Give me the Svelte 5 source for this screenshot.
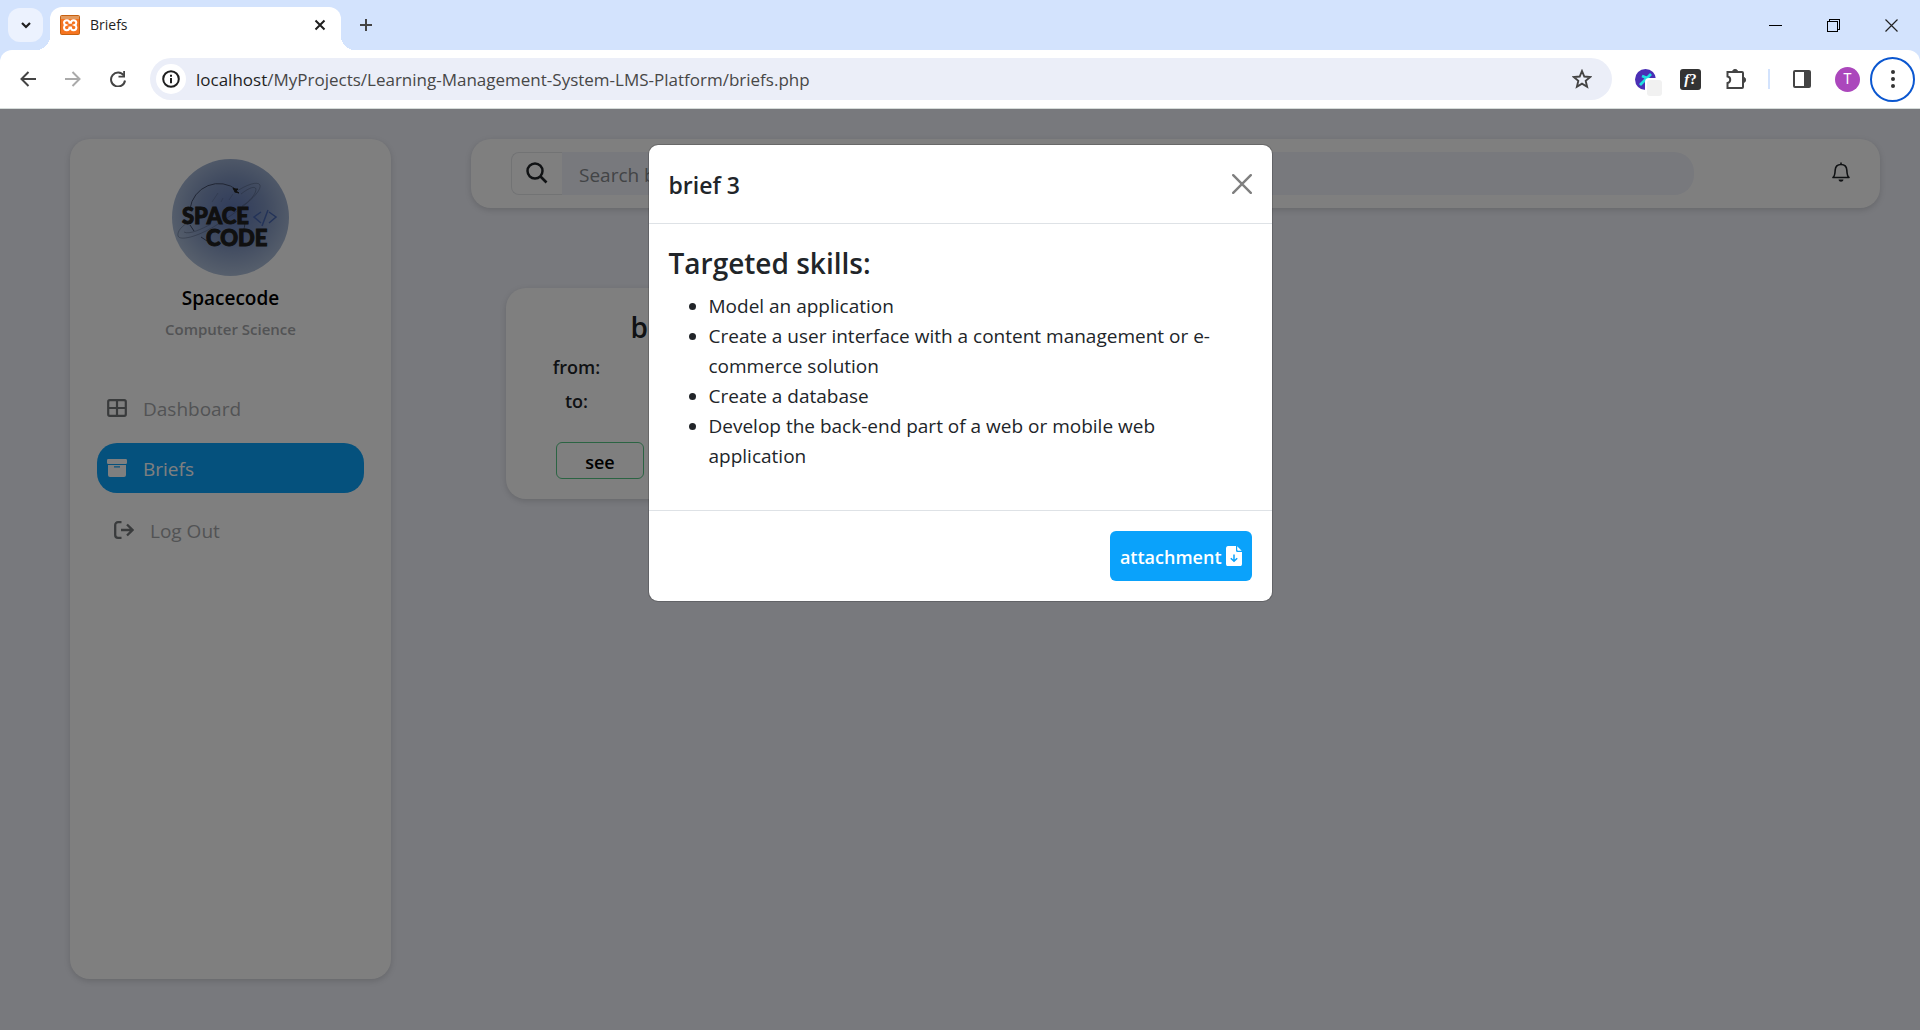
<script>
  const skills = [
    'Model an application',
    'Create a user interface with a content management or e-commerce solution',
    'Create a database',
    'Develop the back-end part of a web or mobile web application'
  ];
</script>

<div class="window">
  <header class="chrome">
    <div class="tabs">
      <button class="tab-search" aria-label="Search tabs">
        <svg width="12" height="12" viewBox="0 0 12 12"><path d="M2 4l4 4 4-4" fill="none" stroke="#1f1f1f" stroke-width="2.2" /></svg>
      </button>
      <div class="tab">
        <svg width="20" height="20" viewBox="0 0 20 20">
          <rect width="20" height="20" rx="2" fill="#c7600f" />
          <rect x="1" y="1" width="18" height="18" rx="1" fill="#f57420" />
          <path d="M1 1h18v3H1z" fill="#e39a5e" />
          <path d="M7 5.2c-2 0-3 1-3 2.500c0 1.200.8 1.900 1.800 2.300C4.400 10.500 4 11.500 4 12.500c0 1.500 1.200 2.700 2.800 2.700c1.700 0 2.700-1 2.700-2.700h1.400c0 1.700 1 2.700 2.600 2.700c1.700 0 2.900-1.200 2.900-2.700c0-1.200-.6-2.100-1.700-2.500c1.100-.4 1.600-1.200 1.600-2.300c0-1.600-1.100-2.500-2.800-2.500c-1.500 0-2.500.9-2.600 2.600H9.500C9.400 6.100 8.500 5.200 7 5.200z" fill="none" stroke="#fff" stroke-width="2" />
        </svg>
        <span class="tab-title">Briefs</span>
        <button class="plain" aria-label="Close tab">
          <svg width="12" height="12" viewBox="0 0 12 12"><path d="M1.500 1.500l9 9m0-9l-9 9" stroke="#1f1f1f" stroke-width="2" /></svg>
        </button>
      </div>
      <button class="plain new-tab" aria-label="New tab">
        <svg width="14" height="14" viewBox="0 0 14 14"><path d="M7 1v12M1 7h12" stroke="#444" stroke-width="2" /></svg>
      </button>
      <div class="controls">
        <button class="plain" aria-label="Minimize"><svg width="13" height="13" viewBox="0 0 13 13" shape-rendering="crispEdges"><path d="M0 6.500h13" stroke="#000" /></svg></button>
        <button class="plain" aria-label="Restore"><svg width="13" height="13" viewBox="0 0 13 13" shape-rendering="crispEdges"><path d="M.5 2.500h10v10H.5zM2.500 2.500v-2h10v10h-2" fill="none" stroke="#000" /></svg></button>
        <button class="plain" aria-label="Close"><svg width="13" height="13" viewBox="0 0 13 13"><path d="M.5.5l12 12m0-12l-12 12" stroke="#222" stroke-width="1.200" /></svg></button>
      </div>
    </div>

    <div class="toolbar">
      <div class="history">
        <button class="plain" aria-label="Back"><svg width="16" height="16" viewBox="0 0 16 16"><path d="M8.500 1L1.500 8l7 7M1.500 8H16" fill="none" stroke="#444" stroke-width="2" /></svg></button>
        <button class="plain" aria-label="Forward"><svg width="16" height="16" viewBox="0 0 16 16"><path d="M7.500 1l7 7-7 7M14.500 8H0" fill="none" stroke="#aaa" stroke-width="2" /></svg></button>
        <button class="plain" aria-label="Reload"><svg width="16" height="16" viewBox="0 0 16 16"><path d="M13.800 4.500A7 7 0 1 0 15 9.500" fill="none" stroke="#444" stroke-width="2" /><path d="M15 0v6.500H8.500V4.700h4.700V0z" fill="#444" /></svg></button>
      </div>
      <div class="omnibox">
        <button class="site" aria-label="Site information">
          <svg width="18" height="18" viewBox="0 0 18 18"><circle cx="9" cy="9" r="7.800" fill="none" stroke="#1f1f1f" stroke-width="2" /><path d="M9 8v5.200M9 4.800v2" stroke="#1f1f1f" stroke-width="2" /></svg>
        </button>
        <span class="url"><b>localhost</b>/MyProjects/Learning-Management-System-LMS-Platform/briefs.php</span>
        <button class="plain" aria-label="Bookmark">
          <svg width="20" height="20" viewBox="0 0 20 20"><path d="M10 2l2.300 5.500 5.900.5-4.500 3.900 1.400 5.800-5.100-3.100-5.100 3.100 1.400-5.800L1.800 8l5.900-.5z" fill="none" stroke="#444" stroke-width="1.900" /></svg>
        </button>
      </div>
      <div class="extensions">
        <button class="plain color-ext" aria-label="Color extension">
          <svg width="28" height="28" viewBox="0 0 28 28"><circle cx="10.500" cy="10.500" r="10.500" fill="#4a2fb5" /><path d="M5 16L16 5M7 7l5 2 4 4" stroke="#1fe0e0" stroke-width="2.800" fill="none" /><rect x="10" y="9" width="18" height="19" rx="4" fill="#fff" /><rect x="12" y="11" width="15" height="16" rx="3" fill="#f1f1f1" /></svg>
        </button>
        <button class="font-ext" aria-label="Font finder"><i>f</i>?</button>
        <button class="plain" aria-label="Extensions">
          <svg width="22" height="22" viewBox="0 0 22 22"><path d="M2.500 4H17a1 1 0 0 1 1 1v14a1 1 0 0 1-1 1H2.500v-5a3.300 3.300 0 0 0 0-6.500z" fill="none" stroke="#444" stroke-width="2" /><path d="M7.500 4a2.600 2.600 0 0 1 5.200 0zM18 9.300a2.600 2.600 0 0 1 0 5.200z" fill="#444" stroke="#444" /></svg>
        </button>
        <span class="divider"></span>
        <button class="plain" aria-label="Side panel">
          <svg width="18" height="18" viewBox="0 0 18 18"><rect x="1" y="1" width="16" height="16" rx="1" fill="#fff" stroke="#444" stroke-width="2" /><path d="M11 1h6v16h-6z" fill="#444" /></svg>
        </button>
        <button class="profile" aria-label="Profile">T</button>
        <button class="menu" aria-label="Browser menu">
          <svg width="6" height="20" viewBox="0 0 6 20"><g fill="#333"><circle cx="3" cy="3" r="2" /><circle cx="3" cy="10" r="2" /><circle cx="3" cy="17" r="2" /></g></svg>
        </button>
      </div>
    </div>
  </header>

  <div class="page">
    <aside class="sidebar">
      <svg class="logo" width="117" height="117" viewBox="0 0 117 117" role="img" aria-label="Space Code">
        <defs>
          <radialGradient id="sky" cx="52%" cy="45%" r="56%">
            <stop offset="0" stop-color="#5f77b6" />
            <stop offset=".5" stop-color="#8095c0" />
            <stop offset="1" stop-color="#b0c1da" />
          </radialGradient>
        </defs>
        <circle cx="58.500" cy="58.500" r="58.500" fill="url(#sky)" />
        <g fill="none" stroke="#414c68" stroke-width=".6">
          <path d="M18 50A29 29 0 0 1 65 31M73 64a30 30 0 0 1-2 9M18 66l4 6M29 78l6 4" stroke-width="1" />
          <path d="M62 34C75 25 86 22 88 26C90 34 67 52 43 67C25 78 8 82 6 77C5 72 10 67 18 62M69 35C78 28 83 27 84 30C84 35 78 42 70 47M12 73C17 76 30 70 39 65" stroke-opacity=".7" />
          <path d="M40 43l6-9M49 43l2-4M57 41l4-6" stroke-opacity=".5" />
        </g>
        <path d="M61 29l2 1 3 0-2 2 3 2-4-1z" fill="#202020" stroke="#202020" />
        <text class="wordmark"><tspan x="10" y="65">SPACE</tspan><tspan x="34" y="87">CODE</tspan></text>
        <path d="M89 53l-7 5 7 6M96 51l-6 16M97 53l7 5-7 6" fill="none" stroke="#4766b0" stroke-width="1.500" />
      </svg>
      <h2>Spacecode</h2>
      <p>Computer Science</p>
      <nav>
        <a href="#dashboard">
          <svg width="20" height="18" viewBox="0 0 20 18"><rect x="1.200" y="1.200" width="17.600" height="15.600" rx="1.500" fill="none" stroke="currentColor" stroke-width="2.200" /><path d="M10 1v16M1 9h18" stroke="currentColor" stroke-width="2.200" /></svg>
          <span>Dashboard</span>
        </a>
        <a href="#briefs" class="active">
          <svg width="20" height="18" viewBox="0 0 20 18"><rect width="20" height="5" rx="1.200" fill="currentColor" /><path fill-rule="evenodd" d="M1 6h18v10a2 2 0 0 1-2 2H3a2 2 0 0 1-2-2zM7 7.300v1.200h6V7.300z" fill="currentColor" /></svg>
          <span>Briefs</span>
        </a>
        <a href="#logout" class="logout">
          <svg width="20" height="18" viewBox="0 0 20 18"><path d="M7.500 1.200H4a2.800 2.800 0 0 0-2.800 2.800v10A2.800 2.800 0 0 0 4 16.800h3.500M7 9h11M13 3.500L18.500 9 13 14.500" fill="none" stroke="currentColor" stroke-width="2.300" /></svg>
          <span>Log Out</span>
        </a>
      </nav>
    </aside>

    <main>
      <div class="topbar">
        <form class="search">
          <button type="button" aria-label="Search">
            <svg width="22" height="22" viewBox="0 0 22 22"><circle cx="9" cy="9" r="7.500" fill="none" stroke="#212529" stroke-width="2.500" /><path d="M14.500 14.500l6 6" stroke="#212529" stroke-width="2.600" /></svg>
          </button>
          <input type="search" placeholder="Search briefs" aria-label="Search briefs" />
        </form>
        <button class="plain bell" aria-label="Notifications">
          <svg width="18" height="20" viewBox="0 0 18 20"><path d="M1 15.500h16c-1.800-1-2-4-2.200-7.500C14.600 4.700 12.300 2.500 9 2.500S3.400 4.700 3.200 8C3 11.500 2.800 14.500 1 15.500zM9 .5v2" fill="none" stroke="#212529" stroke-width="1.600" stroke-linejoin="round" /><path d="M6.500 17.500h5c-.3 1.500-1.200 2.200-2.500 2.200s-2.200-.7-2.500-2.200z" fill="#212529" /></svg>
        </button>
      </div>
      <article class="card">
        <h3>brief 3</h3>
        <dl>
          <dt>from:</dt><dd></dd>
          <dt>to:</dt><dd></dd>
        </dl>
        <button>see</button>
      </article>
    </main>

    <div class="backdrop">
      <div class="modal" role="dialog" aria-modal="true" aria-labelledby="modal-title">
        <div class="modal-head">
          <h4 id="modal-title">brief 3</h4>
          <button class="plain" aria-label="Close">
            <svg width="20" height="20" viewBox="0 0 20 20"><path d="M1.200 1.200l17.600 17.600m0-17.600L1.200 18.800" stroke="#7f7f7f" stroke-width="2.400" stroke-linecap="round" /></svg>
          </button>
        </div>
        <div class="modal-body">
          <h3>Targeted skills:</h3>
          <ul>
            {#each skills as skill}
              <li>{skill}</li>
            {/each}
          </ul>
        </div>
        <div class="modal-foot">
          <a class="attachment" href="#attachment">
            <span>attachment</span>
            <svg width="16" height="20" viewBox="0 0 16 20"><path fill="#fff" d="M2.500 0H10v4.500A1.500 1.500 0 0 0 11.500 6H16v12a2.200 2.200 0 0 1-2.200 2.200H2.200A2.200 2.200 0 0 1 0 18V2.300A2.300 2.300 0 0 1 2.500 0zM11.200.3L15.700 4.800h-3.500a1 1 0 0 1-1-1z" /><path d="M8 8.500v6.700M4.800 12.200L8 15.300l3.200-3.100" fill="none" stroke="#0aa2fb" stroke-width="1.500" /></svg>
          </a>
        </div>
      </div>
    </div>
  </div>
</div>

<style>
  :global(body) {
    margin: 0;
    font-family: 'Open Sans', 'Noto Sans', sans-serif;
  }
  .window, .window :global(*) { box-sizing: border-box; }
  .window {
    display: flex;
    flex-direction: column;
    min-height: 100vh;
    font-size: 19px;
    line-height: 30px;
    color: #212529;
  }
  h2, h3, h4, p, dl, dd, ul { margin: 0; }
  svg { display: block; flex: none; }
  button { font: inherit; color: inherit; cursor: pointer; }
  .plain { padding: 0; border: 0; background: none; }

  .chrome { background: #d3e3fd; }
  .tabs { display: flex; align-items: center; height: 50px; padding-left: 8px; }
  .tab-search {
    display: grid;
    place-items: center;
    width: 35px;
    height: 34px;
    padding: 0;
    border: 0;
    border-radius: 12px;
    background: #ecf2fe;
  }
  .tab {
    position: relative;
    display: flex;
    align-items: center;
    align-self: flex-end;
    gap: 10px;
    width: 291px;
    height: 43px;
    margin-left: 7px;
    padding: 0 15px 7px 10px;
    border-radius: 12px 12px 0 0;
    background: #fff;
  }
  .tab::before, .tab::after {
    content: '';
    position: absolute;
    bottom: 0;
    width: 14px;
    height: 14px;
  }
  .tab::before { right: 100%; background: radial-gradient(circle at 0 0, transparent 14px, #fff 14px); }
  .tab::after { left: 100%; background: radial-gradient(circle at 100% 0, transparent 14px, #fff 14px); }
  .tab-title { flex: 1; font-size: 14px; color: #1f1f1f; }
  .new-tab { margin-left: 18px; }
  .controls { display: flex; gap: 45px; margin-left: auto; padding-right: 22px; }

  .toolbar {
    display: flex;
    align-items: center;
    height: 59px;
    padding: 0 5px 0 20px;
    border-bottom: 1px solid #d5dbd9;
    border-radius: 12px 12px 0 0;
    background: #fff;
  }
  .history { display: flex; gap: 29px; }
  .omnibox {
    display: flex;
    flex: 1;
    align-items: center;
    height: 42px;
    margin-left: 24px;
    padding: 0 20px 0 6px;
    border-radius: 21px;
    background: #ebeef8;
  }
  .site {
    display: grid;
    place-items: center;
    width: 30px;
    height: 30px;
    padding: 0;
    border: 0;
    border-radius: 50%;
    background: #fff;
  }
  .url { flex: 1; margin-left: 10px; padding-top: 1px; font-size: 17px; color: #474747; }
  .url b { font-weight: 400; color: #1f1f1f; }
  .extensions { display: flex; align-items: center; margin-left: 23px; }
  .extensions svg { margin: auto; }
  .color-ext { padding-top: 8px; }
  .font-ext {
    width: 21px;
    height: 21px;
    margin: 0 24px 0 17px;
    padding: 0;
    border: 0;
    border-radius: 3px;
    background: #333;
    color: #fff;
    font: 700 15px/20px 'Liberation Serif', serif;
  }
  .divider { width: 2px; height: 20px; margin: 0 23px 0 21px; background: #d3e3fd; }
  .profile {
    width: 25px;
    height: 25px;
    margin: 0 10px 0 24px;
    padding: 0;
    border: 0;
    border-radius: 50%;
    background: #ab47bc;
    color: #fff;
    font: 14px/25px Roboto, sans-serif;
  }
  .menu {
    width: 45px;
    height: 45px;
    padding: 0;
    border: 2px solid #0b57d0;
    border-radius: 50%;
    background: #fff;
  }

  .page {
    position: relative;
    display: flex;
    flex: 1;
    gap: 80px;
    padding: 30px 40px 51px 70px;
    background: #f0f2fa;
  }
  .sidebar, .topbar, .card {
    border-radius: 20px;
    background: #fff;
    box-shadow: 0 2px 6px rgba(0, 0, 0, 0.15);
  }
  .sidebar {
    display: flex;
    flex: none;
    flex-direction: column;
    align-items: center;
    width: 321px;
    padding: 20px 27px;
  }
  .wordmark {
    font-family: Lato, sans-serif;
    font-size: 22px;
    font-weight: 900;
    fill: #202020;
    stroke: #202020;
    stroke-width: 1px;
  }
  .sidebar h2 { margin-top: 7px; font-size: 19px; font-weight: 600; color: #000; }
  .sidebar p { margin-top: 1px; font-size: 15px; font-weight: 600; color: #a5a7aa; }
  nav { display: flex; flex-direction: column; gap: 10px; width: 100%; margin-top: 39px; }
  nav a {
    display: flex;
    align-items: center;
    gap: 16px;
    height: 50px;
    padding: 0 10px;
    border-radius: 20px;
    color: #737679;
    text-decoration: none;
  }
  nav span { padding-top: 2px; color: #a5a7aa; }
  nav .active { background: #0aa2fb; color: #fff; }
  nav .active span { color: #fff; }
  nav .logout { margin-top: 2px; padding-left: 17px; }

  main { flex: 1; }
  .topbar {
    display: flex;
    align-items: center;
    gap: 138px;
    height: 69px;
    padding: 0 30px 0 40px;
  }
  .search { display: flex; flex: 1; height: 43px; }
  .search button {
    display: grid;
    place-items: center;
    width: 51px;
    padding: 0 0 2px;
    border: 1px solid #e4e6e9;
    border-right: 0;
    border-radius: 8px 0 0 8px;
    background: #fff;
  }
  .search input {
    flex: 1;
    padding: 2px 17px 0;
    border: 0;
    border-radius: 0 20px 20px 0;
    background: #f0f2fa;
    color: #212529;
    font: inherit;
  }
  .search input::placeholder { color: #85888c; }
  .bell { padding-bottom: 3px; }
  .card { width: 336px; margin: 80px 0 0 35px; padding: 20px 43px; font-size: 18px; font-weight: 600; }
  .card h3 { font-size: 28px; line-height: 38px; font-weight: 600; text-align: center; }
  .card dl {
    display: grid;
    grid-template-columns: 1fr 1fr;
    gap: 4px 140px;
    justify-items: center;
    padding: 6px 0 26px;
  }
  .card button {
    display: block;
    width: 88px;
    height: 37px;
    margin-left: 7px;
    padding: 2px 0 0;
    border: 1px solid #57c987;
    border-radius: 6px;
    background: none;
    color: #000;
  }
  .card dt { width: 50px; text-align: center; }

  .backdrop {
    position: absolute;
    inset: 0;
    display: flex;
    align-items: flex-start;
    justify-content: center;
    padding-top: 35px;
    background: rgba(0, 0, 0, 0.5);
  }
  .modal {
    width: 625px;
    border: 1px solid rgba(0, 0, 0, 0.175);
    border-radius: 10px;
    background: #fff;
    background-clip: padding-box;
  }
  .modal-head {
    display: flex;
    align-items: center;
    justify-content: space-between;
    height: 79px;
    padding: 0 20px;
    border-bottom: 1px solid #dee2e6;
  }
  .modal h4 { padding-top: 2px; font-size: 23px; font-weight: 600; }
  .modal-body { padding: 20px; }
  .modal-body h3 { font-size: 28px; line-height: 38px; font-weight: 600; }
  .modal-body ul { margin: 9px 0 19px; padding-left: 40px; }
  .modal-foot {
    display: flex;
    justify-content: flex-end;
    padding: 20px;
    border-top: 1px solid #dee2e6;
  }
  .attachment {
    display: flex;
    align-items: center;
    gap: 4px;
    height: 50px;
    padding: 0 10px;
    border-radius: 6px;
    background: #0aa2fb;
    color: #fff;
    font-size: 18px;
    font-weight: 600;
    text-decoration: none;
  }
  .attachment span { padding-top: 2px; }
</style>
